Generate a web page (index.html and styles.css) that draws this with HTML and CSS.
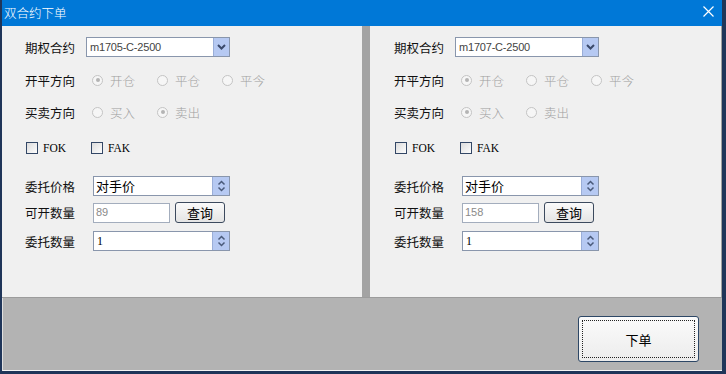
FILE: index.html
```html
<!DOCTYPE html>
<html lang="zh">
<head>
    <meta charset="UTF-8">
    <title>双合约下单</title>
    <link rel="stylesheet" href="styles.css">
</head>
<body>
    <div class="window">
        <div class="titlebar">
            <span class="title">双合约下单</span>
            <svg class="close" width="11" height="11" viewBox="0 0 11 11"><path d="M0.5 0.5L10.5 10.5M10.5 0.5L0.5 10.5" stroke="#fff" stroke-width="1.2" fill="none"/></svg>
        </div>
        <div class="panels">
            <div class="panel">
                <div class="row row-contract">
                    <span class="label label-short">期权合约</span>
                    <div class="combo">
                        <span class="combo-text">m1705-C-2500</span>
                        <span class="combo-btn"><svg width="9" height="6" viewBox="0 0 9 6"><path d="M1 1L4.5 4.5L8 1" stroke="#3b4a6b" stroke-width="2" fill="none"/></svg></span>
                    </div>
                </div>
                <div class="row row-open">
                    <span class="label">开平方向</span>
                    <span class="radio checked"><i></i>开仓</span>
                    <span class="radio"><i></i>平仓</span>
                    <span class="radio"><i></i>平今</span>
                </div>
                <div class="row row-side">
                    <span class="label">买卖方向</span>
                    <span class="radio"><i></i>买入</span>
                    <span class="radio checked"><i></i>卖出</span>
                </div>
                <div class="row row-check">
                    <span class="check"><i></i>FOK</span>
                    <span class="check"><i></i>FAK</span>
                </div>
                <div class="row row-price">
                    <span class="label">委托价格</span>
                    <div class="spin">
                        <span class="spin-text">对手价</span>
                        <span class="spin-btn"><svg width="9" height="12" viewBox="0 0 9 12"><path d="M1.5 4.5L4.5 1.5L7.5 4.5M1.5 7.5L4.5 10.5L7.5 7.5" stroke="#4a5a7a" stroke-width="1.5" fill="none"/></svg></span>
                    </div>
                </div>
                <div class="row row-avail">
                    <span class="label">可开数量</span>
                    <span class="field">89</span>
                    <button class="query">查询</button>
                </div>
                <div class="row row-qty">
                    <span class="label">委托数量</span>
                    <div class="spin">
                        <span class="spin-text num">1</span>
                        <span class="spin-btn"><svg width="9" height="12" viewBox="0 0 9 12"><path d="M1.5 4.5L4.5 1.5L7.5 4.5M1.5 7.5L4.5 10.5L7.5 7.5" stroke="#4a5a7a" stroke-width="1.5" fill="none"/></svg></span>
                    </div>
                </div>
            </div>
            <div class="divider"></div>
            <div class="panel">
                <div class="row row-contract">
                    <span class="label label-short">期权合约</span>
                    <div class="combo">
                        <span class="combo-text">m1707-C-2500</span>
                        <span class="combo-btn"><svg width="9" height="6" viewBox="0 0 9 6"><path d="M1 1L4.5 4.5L8 1" stroke="#3b4a6b" stroke-width="2" fill="none"/></svg></span>
                    </div>
                </div>
                <div class="row row-open">
                    <span class="label">开平方向</span>
                    <span class="radio checked"><i></i>开仓</span>
                    <span class="radio"><i></i>平仓</span>
                    <span class="radio"><i></i>平今</span>
                </div>
                <div class="row row-side">
                    <span class="label">买卖方向</span>
                    <span class="radio checked"><i></i>买入</span>
                    <span class="radio"><i></i>卖出</span>
                </div>
                <div class="row row-check">
                    <span class="check"><i></i>FOK</span>
                    <span class="check"><i></i>FAK</span>
                </div>
                <div class="row row-price">
                    <span class="label">委托价格</span>
                    <div class="spin">
                        <span class="spin-text">对手价</span>
                        <span class="spin-btn"><svg width="9" height="12" viewBox="0 0 9 12"><path d="M1.5 4.5L4.5 1.5L7.5 4.5M1.5 7.5L4.5 10.5L7.5 7.5" stroke="#4a5a7a" stroke-width="1.5" fill="none"/></svg></span>
                    </div>
                </div>
                <div class="row row-avail">
                    <span class="label">可开数量</span>
                    <span class="field">158</span>
                    <button class="query">查询</button>
                </div>
                <div class="row row-qty">
                    <span class="label">委托数量</span>
                    <div class="spin">
                        <span class="spin-text num">1</span>
                        <span class="spin-btn"><svg width="9" height="12" viewBox="0 0 9 12"><path d="M1.5 4.5L4.5 1.5L7.5 4.5M1.5 7.5L4.5 10.5L7.5 7.5" stroke="#4a5a7a" stroke-width="1.5" fill="none"/></svg></span>
                    </div>
                </div>
            </div>
        </div>
        <div class="footer">
            <button class="submit"><span>下单</span></button>
        </div>
    </div>
</body>
</html>
```

FILE: styles.css
```css
body {
    margin: 0;
    font-family: "Noto Sans CJK SC", sans-serif;
    font-size: 12.5px;
    color: #000;
}
.window {
    width: 726px;
    height: 374px;
    box-sizing: border-box;
    border-left: 2px solid #1f3559;
    border-right: 4px solid #1f3559;
    border-bottom: 3px solid #1f3559;
    background-color: #b3b3b3;
    display: flex;
    flex-direction: column;
}
.titlebar {
    height: 26px;
    background-color: #0078d7;
    display: flex;
    align-items: center;
    justify-content: space-between;
    padding: 0 8px 0 2px;
    color: #fff;
}
.title {
    font-size: 12.5px;
    font-weight: 300;
    margin-top: -2px;
}
.close {
    margin-top: -4px;
}
.panels {
    display: flex;
    height: 271px;
    border-bottom: 1px solid #9c9c9c;
}
.panel {
    background-color: #f0f0f0;
    padding: 11px 0 0 23px;
    display: flex;
    flex-direction: column;
}
.panel:first-child {
    width: 337px;
}
.panel:last-child {
    flex: 1;
    padding-left: 24px;
    border-right: 1px solid #a0a0a0;
}
.divider {
    width: 8px;
    background-color: #a3a3a3;
}
.row {
    display: flex;
    align-items: center;
    height: 20px;
}
.row-open { margin-top: 13px; }
.row-side { margin-top: 12px; }
.row-check { margin-top: 16px; }
.row-price { margin-top: 18px; }
.row-avail { margin-top: 6px; height: 21px; }
.row-qty { margin-top: 8px; }
.label {
    width: 68px;
    flex-shrink: 0;
    color: #111;
}
.label-short {
    width: 61px;
}
.combo {
    width: 144px;
    height: 20px;
    box-sizing: border-box;
    border: 1px solid #8996ac;
    background-color: #fff;
    display: flex;
}
.combo-text {
    flex: 1;
    padding-left: 3px;
    font-family: "Liberation Sans", sans-serif;
    font-size: 11px;
    color: #444;
    line-height: 18px;
    letter-spacing: -0.2px;
}
.combo-btn, .spin-btn {
    width: 15px;
    background-color: #b6c9f2;
    border-left: 1px solid #9aaed8;
    display: flex;
    align-items: center;
    justify-content: center;
}
.radio {
    display: flex;
    align-items: center;
    width: 65px;
    color: #a0a0a0;
    font-weight: 300;
}
.row .label + .radio {
    margin-left: -1px;
}
.radio i {
    width: 11px;
    height: 11px;
    box-sizing: border-box;
    border: 1px solid #c4c4c4;
    border-radius: 50%;
    background-color: #f6f6f6;
    margin-right: 7px;
    position: relative;
}
.radio.checked i::after {
    content: "";
    position: absolute;
    left: 2.5px;
    top: 2.5px;
    width: 4px;
    height: 4px;
    border-radius: 50%;
    background-color: #b4b4b4;
}
.check {
    display: flex;
    align-items: center;
    width: 65px;
    font-family: "Liberation Serif", serif;
    font-size: 11.5px;
    margin-left: 1px;
}
.check + .check {
    margin-left: 0;
}
.check i {
    width: 12px;
    height: 12px;
    box-sizing: border-box;
    border: 1px solid #334766;
    background: linear-gradient(135deg, #dcdcdc, #fdfdfd);
    margin-right: 5px;
}
.spin {
    width: 137px;
    height: 20px;
    box-sizing: border-box;
    border: 1px solid #8996ac;
    background-color: #fff;
    display: flex;
}
.spin-btn {
    width: 16px;
}
.spin-text {
    flex: 1;
    padding-left: 2px;
    line-height: 18px;
    font-size: 13px;
}
.spin-text.num {
    font-family: "Liberation Serif", serif;
    font-size: 12px;
    padding-left: 3px;
}
.field {
    width: 77px;
    height: 20px;
    box-sizing: border-box;
    border: 1px solid #a3adbd;
    background-color: #fff;
    color: #8a8a8a;
    font-family: "Liberation Sans", sans-serif;
    font-size: 11px;
    line-height: 16px;
    padding-left: 2px;
}
.query {
    margin-left: 5px;
    width: 50px;
    height: 21px;
    border: 1px solid #3c4a5e;
    border-radius: 3px;
    background: linear-gradient(#fafafa, #e4e4e4);
    font-family: "Noto Sans CJK SC", sans-serif;
    font-size: 13px;
    padding: 0;
    line-height: 18px;
    color: #000;
}
.footer {
    flex: 1;
    display: flex;
    justify-content: flex-end;
    align-items: flex-start;
    padding: 18px 23px 0 0;
    border-bottom: 1px solid #f4f4f4;
    border-left: 1px solid #e0e0e0;
}
.submit {
    width: 121px;
    height: 46px;
    padding: 3px;
    border: 1px solid #2d4766;
    border-radius: 3px;
    background: linear-gradient(#fbfbfb, #ececec);
    display: flex;
}
.submit span {
    flex: 1;
    border: 1px dotted #222;
    display: flex;
    align-items: center;
    justify-content: center;
    font-family: "Noto Sans CJK SC", sans-serif;
    font-size: 13px;
    color: #000;
}
```
